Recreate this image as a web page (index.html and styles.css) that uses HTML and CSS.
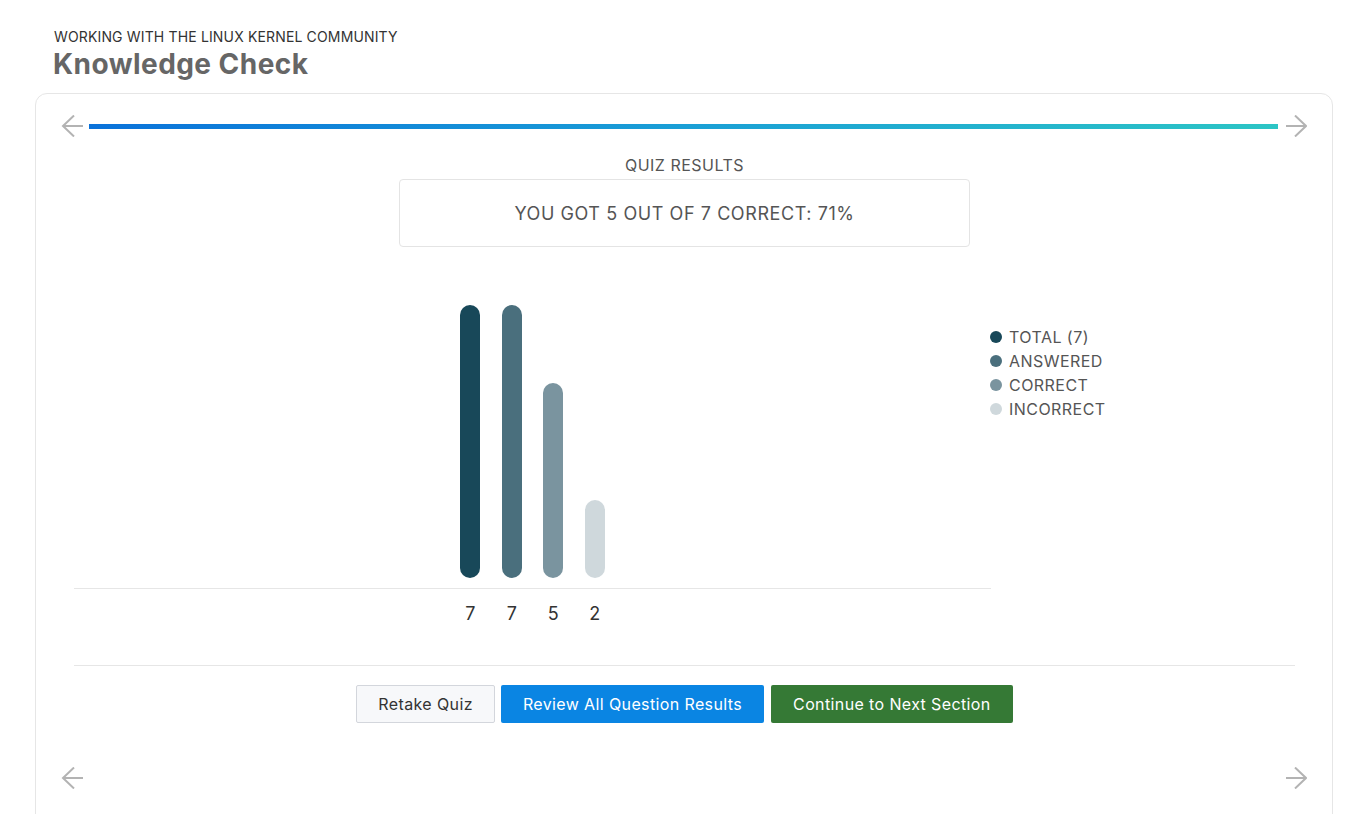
FILE: index.html
```html
<!DOCTYPE html>
<html lang="en">
<head>
<meta charset="utf-8">
<title>Knowledge Check</title>
<link rel="stylesheet" href="styles.css">
</head>
<body>
<header class="header">
  <div class="eyebrow">WORKING WITH THE LINUX KERNEL COMMUNITY</div>
  <h1 class="title">Knowledge Check</h1>
</header>
<section class="card">
  <div class="nav-row">
    <span class="arrow"><svg width="22" height="22" viewBox="0 0 22 22"><path d="M22 11H2M13 0.5L2 11L13 21.5" fill="none" stroke="#b3b3b3" stroke-width="2"/></svg></span>
    <div class="progress"></div>
    <span class="arrow"><svg width="22" height="22" viewBox="0 0 22 22"><path d="M1 11H21M10 0.5L21 11L10 21.5" fill="none" stroke="#b3b3b3" stroke-width="2"/></svg></span>
  </div>
  <div class="content">
    <div class="results-title">QUIZ RESULTS</div>
    <div class="score-box">YOU GOT 5 OUT OF 7 CORRECT: 71%</div>
    <div class="chart-row">
      <div class="chart">
        <div class="plot">
          <div class="bar c1" style="height:273px"></div>
          <div class="bar c2" style="height:273px"></div>
          <div class="bar c3" style="height:195px"></div>
          <div class="bar c4" style="height:78px"></div>
        </div>
        <div class="values">
          <span>7</span><span>7</span><span>5</span><span>2</span>
        </div>
      </div>
      <ul class="legend">
        <li><i class="dot c1"></i>TOTAL (7)</li>
        <li><i class="dot c2"></i>ANSWERED</li>
        <li><i class="dot c3"></i>CORRECT</li>
        <li><i class="dot c4"></i>INCORRECT</li>
      </ul>
    </div>
    <hr class="divider">
    <div class="actions">
      <button class="btn btn-light">Retake Quiz</button>
      <button class="btn btn-blue">Review All Question Results</button>
      <button class="btn btn-green">Continue to Next Section</button>
    </div>
  </div>
  <div class="nav-row bottom">
    <span class="arrow"><svg width="22" height="22" viewBox="0 0 22 22"><path d="M22 11H2M13 0.5L2 11L13 21.5" fill="none" stroke="#b3b3b3" stroke-width="2"/></svg></span>
    <span class="arrow"><svg width="22" height="22" viewBox="0 0 22 22"><path d="M1 11H21M10 0.5L21 11L10 21.5" fill="none" stroke="#b3b3b3" stroke-width="2"/></svg></span>
  </div>
</section>
</body>
</html>
```
FILE: styles.css
```css
* { box-sizing: border-box; }
html, body { margin: 0; padding: 0; background: #fff; }
body {
  font-family: Inter, "Noto Sans", "Liberation Sans", sans-serif;
  color: #333;
  overflow: hidden;
}
.header { padding: 28px 0 0 54px; }
.eyebrow { font-size: 14px; line-height: 17px; color: #333; letter-spacing: 0.15px; }
.title {
  margin: 2px 0 0 -1px;
  font-size: 28px;
  line-height: 34px;
  font-weight: 700;
  color: #666;
  letter-spacing: 0.45px;
}
.card {
  margin: 12px 0 0 35px;
  width: 1298px;
  min-height: 760px;
  border: 1px solid #e6e6e6;
  border-radius: 12px;
  padding: 21px 25px 0;
}
.nav-row {
  display: flex;
  align-items: center;
  gap: 6px;
  height: 22px;
}
.nav-row.bottom { justify-content: space-between; margin-top: 44px; }
.arrow { display: flex; width: 22px; height: 22px; }
.progress {
  flex: 1;
  height: 5px;
  margin-right: 1px;
  background: linear-gradient(90deg, #0a72da 0%, #1a9fd6 50%, #2cc5c5 100%);
}
.content { margin: 0 12px 0 13px; }
.results-title {
  margin-top: 18px;
  text-align: center;
  font-size: 16px;
  line-height: 20px;
  color: #555;
  letter-spacing: 0.5px;
}
.score-box {
  width: 571px;
  margin: 4px auto 0;
  border: 1px solid #e4e4e4;
  border-radius: 4px;
  padding: 23px 0 21px;
  text-align: center;
  font-size: 18px;
  line-height: 22px;
  color: #555;
  letter-spacing: 0.58px;
}
.chart-row { display: flex; margin-top: 43px; }
.chart { width: 917px; flex: none; }
.plot {
  display: flex;
  justify-content: center;
  align-items: flex-end;
  gap: 21.5px;
  height: 299px;
  padding: 0 0 10px;
  border-bottom: 1px solid #e6e6e6;
}
.bar { width: 20px; border-radius: 10px; }
.c1 { background: #184859; }
.c2 { background: #4a6f7d; }
.c3 { background: #7a949f; }
.c4 { background: #cfd8dc; }
.values {
  display: flex;
  justify-content: center;
  gap: 21.5px;
  margin-top: 14px;
  font-size: 18px;
  line-height: 22px;
  color: #333;
}
.values span { width: 20px; text-align: center; }
.legend {
  list-style: none;
  margin: 35px 0 0 -1px;
  padding: 0;
  font-size: 16px;
  line-height: 24px;
  color: #555;
  letter-spacing: 0.45px;
}
.legend li { display: flex; align-items: center; gap: 7px; }
.dot { width: 12px; height: 12px; border-radius: 50%; display: inline-block; }
.divider {
  margin: 40px 0 0;
  border: 0;
  border-top: 1px solid #e6e6e6;
  height: 0;
}
.actions {
  display: flex;
  justify-content: center;
  gap: 6px;
  margin-top: 19px;
}
.btn {
  height: 38px;
  padding: 0 21px;
  font-family: inherit;
  font-size: 16px;
  letter-spacing: 0.38px;
  border-radius: 2px;
  border: 1px solid transparent;
  cursor: pointer;
}
.btn-light { background: #f7f8fa; border-color: #d3d6dc; color: #333; }
.btn-blue { background: #0a85e3; color: #fff; margin-left: 0; }
.btn-green { background: #357935; color: #fff; margin-left: 1px; }
```
